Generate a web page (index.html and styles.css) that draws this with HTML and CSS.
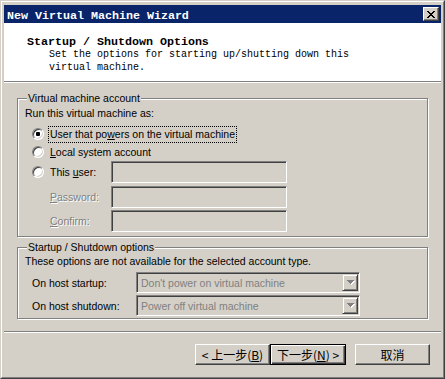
FILE: index.html
```html
<!DOCTYPE html>
<html>
<head>
<meta charset="utf-8">
<title>New Virtual Machine Wizard</title>
<link rel="stylesheet" href="styles.css">
</head>
<body>
<div class="window">
  <div class="frame">
    <div class="titlebar">
      <span class="title">New Virtual Machine Wizard</span>
      <span class="close"><svg width="8" height="7" viewBox="0 0 8 7" shape-rendering="crispEdges"><path fill="#000" d="M0 0h2v1H0z M6 0h2v1H6z M1 1h2v1H1z M5 1h2v1H5z M2 2h4v1H2z M3 3h2v1H3z M2 4h4v1H2z M1 5h2v1H1z M5 5h2v1H5z M0 6h2v1H0z M6 6h2v1H6z"/></svg></span>
    </div>
    <div class="header">
      <div class="h-title">Startup / Shutdown Options</div>
      <div class="h-sub">Set the options for starting up/shutting down this<br>virtual machine.</div>
    </div>
    <div class="body">
      <fieldset class="group acct">
        <legend>Virtual machine account</legend>
        <div class="line">Run this virtual machine as:</div>
        <div class="opts">
          <div class="opt"><span class="radio on"></span><span class="lbl focus">User that po<u>w</u>ers on the virtual machine</span></div>
          <div class="opt"><span class="radio"></span><span class="lbl"><u>L</u>ocal system account</span></div>
          <div class="opt field"><span class="radio"></span><span class="lbl fixed">This <u>u</u>ser:</span><span class="edit"></span></div>
          <div class="opt field indent pw"><span class="lbl fixed dis"><u>P</u>assword:</span><span class="edit"></span></div>
          <div class="opt field indent cf"><span class="lbl fixed dis"><u>C</u>onfirm:</span><span class="edit"></span></div>
        </div>
      </fieldset>
      <fieldset class="group power">
        <legend>Startup / Shutdown options</legend>
        <div class="line info">These options are not available for the selected account type.</div>
        <div class="combos">
          <span class="clbl">On host startup:</span>
          <span class="combo"><span class="val">Don't power on virtual machine</span><span class="drop"><svg width="8" height="5" viewBox="0 0 8 5" shape-rendering="crispEdges"><path fill="#fff" transform="translate(1 1)" d="M0 0h7v1H0z M1 1h5v1H1z M2 2h3v1H2z M3 3h1v1H3z"/><path fill="#808080" d="M0 0h7v1H0z M1 1h5v1H1z M2 2h3v1H2z M3 3h1v1H3z"/></svg></span></span>
          <span class="clbl">On host shutdown:</span>
          <span class="combo"><span class="val">Power off virtual machine</span><span class="drop"><svg width="8" height="5" viewBox="0 0 8 5" shape-rendering="crispEdges"><path fill="#fff" transform="translate(1 1)" d="M0 0h7v1H0z M1 1h5v1H1z M2 2h3v1H2z M3 3h1v1H3z"/><path fill="#808080" d="M0 0h7v1H0z M1 1h5v1H1z M2 2h3v1H2z M3 3h1v1H3z"/></svg></span></span>
        </div>
      </fieldset>
    </div>
    <div class="buttons">
      <span class="btn back">&lt; 上一步(<u>B</u>)</span>
      <span class="btn next def">下一步(<u>N</u>) &gt;</span>
      <span class="btn cancel">取消</span>
    </div>
  </div>
</div>
</body>
</html>
```
FILE: styles.css
```css
* { box-sizing: border-box; }
html, body { margin: 0; padding: 0; }
body {
  width: 445px;
  height: 379px;
  overflow: hidden;
  background: #d4d0c8;
  font-family: "Liberation Sans", Arial, sans-serif;
  font-size: 10.5px;
  color: #000;
}
u { text-decoration: underline; text-underline-offset: 1px; }

.window {
  width: 445px;
  height: 379px;
  border: 1px solid;
  border-color: #d4d0c8 #404040 #404040 #d4d0c8;
  display: flex;
  flex-direction: column;
}
.frame {
  flex: 1;
  border: 1px solid;
  border-color: #fff #808080 #808080 #fff;
  padding: 3px 2px 2px 2px;
  display: flex;
  flex-direction: column;
}

.titlebar {
  height: 18px;
  flex: none;
  background: #0a246a;
  display: flex;
  align-items: center;
  justify-content: space-between;
  padding: 0 2px 0 3px;
}
.title {
  color: #fff;
  font-family: "Liberation Mono", "DejaVu Sans Mono", monospace;
  font-weight: bold;
  font-size: 11.67px;
  line-height: 14px;
  padding-top: 3px;
  white-space: nowrap;
}
.close {
  width: 16px;
  height: 14px;
  background: #d4d0c8;
  border: 1px solid;
  border-color: #fff #404040 #404040 #fff;
  box-shadow: inset -1px -1px 0 #808080;
  display: flex;
  align-items: center;
  justify-content: center;
  padding-right: 1px;
}
.close svg { display: block; }

.header {
  height: 59px;
  flex: none;
  background: #fff;
  border-bottom: 1px solid #808080;
  padding: 12px 0 0 23px;
  font-family: "Liberation Mono", "DejaVu Sans Mono", monospace;
}
.h-title {
  font-weight: bold;
  font-size: 11.67px;
  line-height: 14px;
  white-space: nowrap;
}
.h-sub {
  font-size: 10px;
  line-height: 12.5px;
  padding-left: 22px;
  white-space: nowrap;
}

.body {
  flex: none;
  border-top: 1px solid #fff;
  border-bottom: 1px solid #808080;
  padding: 9px 13px 12px 13px;
  display: flex;
  flex-direction: column;
  gap: 4px;
}

.group {
  margin: 0;
  min-width: 0;
  border: 1px solid #808080;
  box-shadow: inset 1px 1px 0 #fff, 1px 1px 0 #fff;
  padding: 2px 7px 4px 7px;
}
.group legend {
  margin-left: 2px;
  padding: 0 1px;
  line-height: 13px;
  background: #d4d0c8;
}
.group.power { padding-top: 1px; padding-bottom: 2px; }

.line {
  line-height: 13px;
  white-space: nowrap;
}

.opts {
  margin-top: 5px;
  padding-left: 7px;
  display: flex;
  flex-direction: column;
}
.opt {
  height: 18px;
  display: flex;
  align-items: center;
}
.opt.field { height: 22px; }
.opt.indent { padding-left: 16px; }
.opt.pw { margin-top: 3px; }
.opt.cf { margin-top: 2px; }

.radio {
  flex: none;
  width: 12px;
  height: 12px;
  border-radius: 50%;
  border: 1px solid;
  border-color: #808080 #fff #fff #808080;
  box-shadow: inset 1px 1px 0 #404040, inset -1px -1px 0 #d4d0c8;
  background: #fff;
  display: flex;
  align-items: center;
  justify-content: center;
}
.radio.on::after {
  content: "";
  width: 4px;
  height: 4px;
  border-radius: 1px;
  background: #000;
}

.lbl {
  margin-left: 4px;
  padding: 0 1px;
  border: 1px dotted transparent;
  line-height: 15px;
  white-space: nowrap;
}
.opt.indent .lbl { margin-left: 0; }
.lbl.focus { border-color: #000; }
.lbl.fixed { width: 63px; flex: none; }
.lbl.dis {
  color: #808080;
  text-shadow: 1px 1px 0 #fff;
}

.edit {
  flex: none;
  width: 176px;
  height: 22px;
  border: 1px solid;
  border-color: #808080 #fff #fff #808080;
  box-shadow: inset 1px 1px 0 #404040, inset -1px -1px 0 #d4d0c8;
  background: #d4d0c8;
}

.combos {
  margin-top: 4px;
  padding-left: 7px;
  display: grid;
  grid-template-columns: 104px 224px;
  grid-auto-rows: 21px;
  row-gap: 2px;
  align-items: center;
}
.clbl { white-space: nowrap; }
.combo {
  height: 21px;
  border: 1px solid;
  border-color: #808080 #fff #fff #808080;
  box-shadow: inset 1px 1px 0 #404040, inset -1px -1px 0 #d4d0c8;
  background: #d4d0c8;
  padding: 1px;
  display: flex;
  align-items: center;
  justify-content: space-between;
}
.combo .val {
  color: #808080;
  padding-left: 3px;
  white-space: nowrap;
}
.drop {
  flex: none;
  width: 16px;
  height: 17px;
  border: 1px solid;
  border-color: #d4d0c8 #404040 #404040 #d4d0c8;
  box-shadow: inset 1px 1px 0 #fff, inset -1px -1px 0 #808080;
  display: flex;
  align-items: center;
  justify-content: center;
  padding-left: 1px;
}
.drop svg { display: block; }

.buttons {
  flex: 1;
  border-top: 1px solid #fff;
  padding: 11px 11px 0 0;
  display: flex;
  justify-content: flex-end;
  align-items: flex-start;
}
.btn {
  width: 75px;
  height: 21px;
  background: #d4d0c8;
  border: 1px solid;
  border-color: #fff #404040 #404040 #fff;
  box-shadow: inset -1px -1px 0 #808080;
  display: flex;
  align-items: center;
  justify-content: center;
  font-family: "Noto Sans CJK SC", "Liberation Sans", sans-serif;
  font-size: 12px;
  line-height: 14px;
  white-space: nowrap;
}
.btn.def {
  width: 76px;
  border-color: #000;
  box-shadow: inset 1px 1px 0 #fff, inset -1px -1px 0 #404040, inset -2px -2px 0 #808080;
}
.btn.cancel { margin-left: 9px; }
```
